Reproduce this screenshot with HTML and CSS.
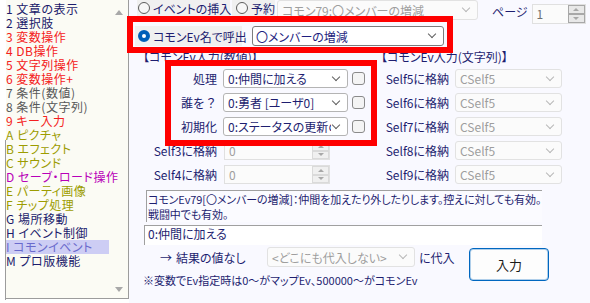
FILE: index.html
```html
<!DOCTYPE html>
<html lang="ja">
<head>
  <meta charset="UTF-8">
  <title>コモンイベント</title>
  <link rel="stylesheet" href="styles.css">
</head>
<body>
  <div class="app">
    <div class="cmd-list">
      <div class="cmd-box">
        <ul class="cmds">
          <li class="c-navy">1 文章の表示</li>
          <li class="c-navy">2 選択肢</li>
          <li class="c-red">3 変数操作</li>
          <li class="c-red">4 DB操作</li>
          <li class="c-red">5 文字列操作</li>
          <li class="c-red">6 変数操作+</li>
          <li class="c-gray">7 条件(数値)</li>
          <li class="c-gray">8 条件(文字列)</li>
          <li class="c-red">9 キー入力</li>
          <li class="c-olive">A ピクチャ</li>
          <li class="c-olive">B エフェクト</li>
          <li class="c-olive">C サウンド</li>
          <li class="c-pink">D セーブ・ロード操作</li>
          <li class="c-olive">E パーティ画像</li>
          <li class="c-olive">F チップ処理</li>
          <li class="c-navy">G 場所移動</li>
          <li class="c-navy">H イベント制御</li>
          <li class="sel">I コモンイベント</li>
          <li class="c-navy">M プロ版機能</li>
        </ul>
        <div class="vscroll">
          <span class="tri-up"></span>
          <span class="tri-down"></span>
        </div>
      </div>
    </div>

    <div class="panel">
      <div class="top-row">
        <label class="radio r-insert"><span class="dot"></span>イベントの挿入</label>
        <label class="radio r-reserve"><span class="dot"></span>予約</label>
        <div class="combo off top-combo"><span>コモン79:〇メンバーの増減</span><span class="chev"></span></div>
        <span class="page-label">ページ</span>
        <div class="spin page-spin">
          <span class="spin-val">1</span>
          <span class="spin-btns"><span><i class="tri-up"></i></span><span><i class="tri-down"></i></span></span>
        </div>
      </div>

      <div class="call-row">
        <label class="radio on"><span class="dot"></span>コモンEv名で呼出</label>
        <div class="combo call-combo"><span>〇メンバーの増減</span><span class="chev"></span></div>
      </div>

      <div class="inputs">
        <div class="col col-num">
          <div class="col-head">【コモンEv入力(数値)】</div>
          <div class="fields">
            <div class="field">
              <span class="f-label">処理</span>
              <div class="combo arg-combo"><span class="clip">0:仲間に加える</span><span class="chev"></span></div>
              <span class="check"></span>
            </div>
            <div class="field">
              <span class="f-label full">誰を？</span>
              <div class="combo arg-combo"><span class="clip">0:勇者 [ユーザ0]</span><span class="chev"></span></div>
              <span class="check"></span>
            </div>
            <div class="field">
              <span class="f-label">初期化</span>
              <div class="combo arg-combo"><span class="clip">0:ステータスの更新のみ</span><span class="chev"></span></div>
              <span class="check"></span>
            </div>
            <div class="field">
              <span class="f-label">Self3に格納</span>
              <div class="spin num-spin">
                <span class="spin-val">0</span>
                <span class="spin-btns"><span><i class="tri-up"></i></span><span><i class="tri-down"></i></span></span>
              </div>
            </div>
            <div class="field">
              <span class="f-label">Self4に格納</span>
              <div class="spin num-spin">
                <span class="spin-val">0</span>
                <span class="spin-btns"><span><i class="tri-up"></i></span><span><i class="tri-down"></i></span></span>
              </div>
            </div>
          </div>
        </div>

        <div class="col col-str">
          <div class="col-head">【コモンEv入力(文字列)】</div>
          <div class="fields">
            <div class="field">
              <span class="f-label">Self5に格納</span>
              <div class="combo off str-combo"><span>CSelf5</span><span class="chev"></span></div>
            </div>
            <div class="field">
              <span class="f-label">Self6に格納</span>
              <div class="combo off str-combo"><span>CSelf5</span><span class="chev"></span></div>
            </div>
            <div class="field">
              <span class="f-label">Self7に格納</span>
              <div class="combo off str-combo"><span>CSelf5</span><span class="chev"></span></div>
            </div>
            <div class="field">
              <span class="f-label">Self8に格納</span>
              <div class="combo off str-combo"><span>CSelf5</span><span class="chev"></span></div>
            </div>
            <div class="field">
              <span class="f-label">Self9に格納</span>
              <div class="combo off str-combo"><span>CSelf5</span><span class="chev"></span></div>
            </div>
          </div>
        </div>
      </div>

      <div class="desc">コモンEv79[〇メンバーの増減]：仲間を加えたり外したりします。控えに対しても有効。<br>戦闘中でも有効。</div>
      <div class="opt-desc">0:仲間に加える</div>

      <div class="bottom">
        <div class="bottom-left">
          <div class="result-row">
            <span class="arrow">→</span>
            <span class="result-label">結果の値なし</span>
            <div class="combo off res-combo"><span>&lt;どこにも代入しない&gt;</span><span class="chev"></span></div>
            <span class="assign">に代入</span>
          </div>
          <div class="note">※変数でEv指定時は0～がマップEv、500000～がコモンEv</div>
        </div>
        <button class="btn-enter">入力</button>
      </div>
    </div>

    <div class="mark mark-call"></div>
    <div class="mark mark-args"></div>
  </div>
</body>
</html>
```

FILE: styles.css
```css
* {
  box-sizing: border-box;
}
body {
  margin: 0;
  width: 590px;
  height: 303px;
  overflow: hidden;
  font-family: "Noto Sans CJK JP", "Noto Sans", sans-serif;
  font-size: 12px;
  font-feature-settings: "palt";
  color: #1e1e70;
  background: #fff;
}
.app {
  position: relative;
  display: flex;
  height: 303px;
}

/* command list */
.cmd-list {
  width: 129px;
  height: 303px;
  padding-left: 6px;
  padding-bottom: 4px;
  display: flex;
  background: #fff linear-gradient(#9c9c9c, #9c9c9c) 5px 140px / 1px 160px no-repeat;
}
.cmd-box {
  flex: 1;
  display: flex;
  background: #fbfbf4;
  border-right: 1px solid #9c9c9c;
  border-bottom: 1px solid #9c9c9c;
}
.cmds {
  list-style: none;
  margin: 0;
  padding: 2px 0 0;
  width: 103px;
  font-size: 12px;
  line-height: 14px;
  letter-spacing: 0.5px;
}
.cmds li {
  height: 14px;
  white-space: nowrap;
}
.c-navy { color: #1c1c6c; }
.c-red { color: #f42020; }
.c-gray { color: #585858; }
.c-olive { color: #9c9c00; }
.c-pink { color: #b800b8; }
.cmds .sel {
  background: #cdcdf4;
  color: #6a6acc;
}
.vscroll {
  flex: 1;
  display: flex;
  flex-direction: column;
  justify-content: space-between;
  align-items: center;
  padding: 10px 0 6px;
}
.tri-up,
.tri-down {
  display: block;
  width: 0;
  height: 0;
  border-left: 4px solid transparent;
  border-right: 4px solid transparent;
}
.tri-up { border-bottom: 5px solid #a8a8a8; }
.tri-down { border-top: 5px solid #a8a8a8; }

/* main panel */
.panel {
  flex: 1;
  background: #f9f9ff;
}
.top-row {
  display: flex;
  align-items: flex-start;
  height: 24px;
  padding-left: 8px;
}
.radio {
  display: flex;
  align-items: center;
  gap: 3px;
  background: #f0f0f0;
  color: #1e1e70;
  white-space: nowrap;
}
.radio .dot {
  width: 12px;
  height: 12px;
  border-radius: 50%;
  border: 1px solid #5c5c5c;
  background: #f7f7f7;
  flex: none;
}
.r-insert {
  width: 93px;
  height: 16px;
  padding-left: 1px;
}
.r-reserve {
  width: 43px;
  height: 16px;
  margin-left: 2px;
  padding-left: 4px;
}
.radio.on {
  width: 107px;
  height: 20px;
  padding-left: 3px;
}
.radio.on .dot {
  border: 4px solid #005fb8;
  background: #fff;
}

.combo {
  display: flex;
  align-items: center;
  justify-content: space-between;
  height: 20px;
  padding-left: 4px;
  background: #fff;
  border: 1px solid #b4b4b4;
  border-radius: 3px;
  white-space: nowrap;
  overflow: hidden;
}
.combo .chev {
  flex: none;
  width: 6px;
  height: 6px;
  margin: -4px 8px 0 4px;
  border-right: 1px solid #606060;
  border-bottom: 1px solid #606060;
  transform: rotate(45deg);
}
.combo.off {
  background: #fbfbfb;
  border-color: #e2e2e2;
  color: #9e9e9e;
}
.combo.off .chev {
  border-color: #b8b8b8;
}
.top-combo {
  width: 201px;
  margin-left: 2px;
}
.page-label {
  margin: 3px 0 0 14px;
  line-height: 18px;
}
.spin {
  display: flex;
  height: 20px;
  background: #fbfbfb;
  border: 1px solid #e0e0e0;
  color: #9e9e9e;
}
.spin-val {
  flex: 1;
  padding-left: 4px;
  line-height: 18px;
}
.spin-btns {
  width: 17px;
  display: flex;
  flex-direction: column;
}
.spin-btns span {
  flex: 1;
  display: flex;
  align-items: center;
  justify-content: center;
  background: #f0f0f0;
  border: 1px solid #dadada;
}
.spin-btns .tri-up,
.spin-btns .tri-down {
  border-left-width: 3px;
  border-right-width: 3px;
}
.spin-btns .tri-up { border-bottom-width: 3px; }
.spin-btns .tri-down { border-top-width: 3px; }
.page-spin {
  width: 54px;
  margin: 4px 0 0 4px;
  color: #707070;
}
.page-spin .spin-btns span {
  border-color: #a8a8a8;
  background: #e8e8e8;
}

.call-row {
  display: flex;
  align-items: center;
  height: 24px;
  padding-left: 6px;
}
.call-combo {
  width: 192px;
  margin-left: 10px;
  border-color: #7c7c7c;
  color: #1e1e80;
  padding-left: 3px;
}

/* argument columns */
.inputs {
  display: flex;
  padding-left: 14px;
}
.col-num {
  width: 238px;
}
.col-head {
  height: 18px;
  line-height: 18px;
  margin-bottom: 3px;
  white-space: nowrap;
}
.fields {
  display: flex;
  flex-direction: column;
  gap: 5px;
}
.field {
  display: flex;
  align-items: center;
  gap: 6px;
  height: 19px;
}
.f-label {
  width: 74px;
  text-align: right;
  white-space: nowrap;
}
.f-label.full {
  font-feature-settings: normal;
}
.col-str .f-label {
  width: 68px;
}
.field .combo {
  height: 19px;
}
.arg-combo {
  width: 125px;
  color: #1e1e70;
}
.arg-combo .clip {
  overflow: hidden;
  min-width: 0;
}
.arg-combo .chev {
  margin-left: 2px;
}
.check {
  width: 13px;
  height: 13px;
  margin-left: -2px;
  border: 1px solid #8a8a8a;
  border-radius: 3px;
  background: #f4f4f4;
}
.num-spin {
  width: 106px;
  height: 19px;
  margin-left: 1px;
}
.num-spin .spin-val {
  line-height: 17px;
}
.str-combo {
  width: 107px;
}

/* description */
.desc {
  height: 32px;
  width: 396px;
  margin: 6px 0 0 17px;
  padding: 1px 0 0 1px;
  font-size: 11px;
  line-height: 15px;
  letter-spacing: -0.1px;
  background: #fbfbff;
  border-top: 1px solid #a0a0a0;
  border-left: 1px solid #a0a0a0;
  white-space: nowrap;
}
.opt-desc {
  height: 20px;
  width: 398px;
  margin: 3px 0 0 15px;
  padding: 1px 0 0 3px;
  line-height: 14px;
  background: #fff;
  border-top: 1px solid #a0a0a0;
  border-left: 1px solid #a0a0a0;
}

.bottom {
  display: flex;
  margin-top: 2px;
}
.bottom-left {
  width: 340px;
}
.result-row {
  display: flex;
  align-items: center;
  height: 20px;
  padding-left: 31px;
  white-space: nowrap;
}
.arrow {
  width: 16px;
}
.result-label {
  width: 91px;
}
.res-combo {
  width: 148px;
}
.assign {
  margin-left: 4px;
}
.note {
  margin-top: 6px;
  padding-left: 14px;
  font-size: 11px;
  line-height: 14px;
  white-space: nowrap;
}
.btn-enter {
  width: 80px;
  height: 33px;
  margin-top: 1px;
  background: #fdfdfd;
  border: 1px solid #0067c0;
  border-radius: 4px;
  box-shadow: inset 0 0 0 1px rgba(0, 103, 192, 0.3);
  font-family: inherit;
  font-size: 13px;
  color: #1a1a1a;
}

/* red annotation frames */
.mark {
  position: absolute;
  border: 6px solid #f00;
}
.mark-call {
  left: 127px;
  top: 16px;
  width: 326px;
  height: 37px;
}
.mark-args {
  left: 165px;
  top: 60px;
  width: 212px;
  height: 86px;
}
```
